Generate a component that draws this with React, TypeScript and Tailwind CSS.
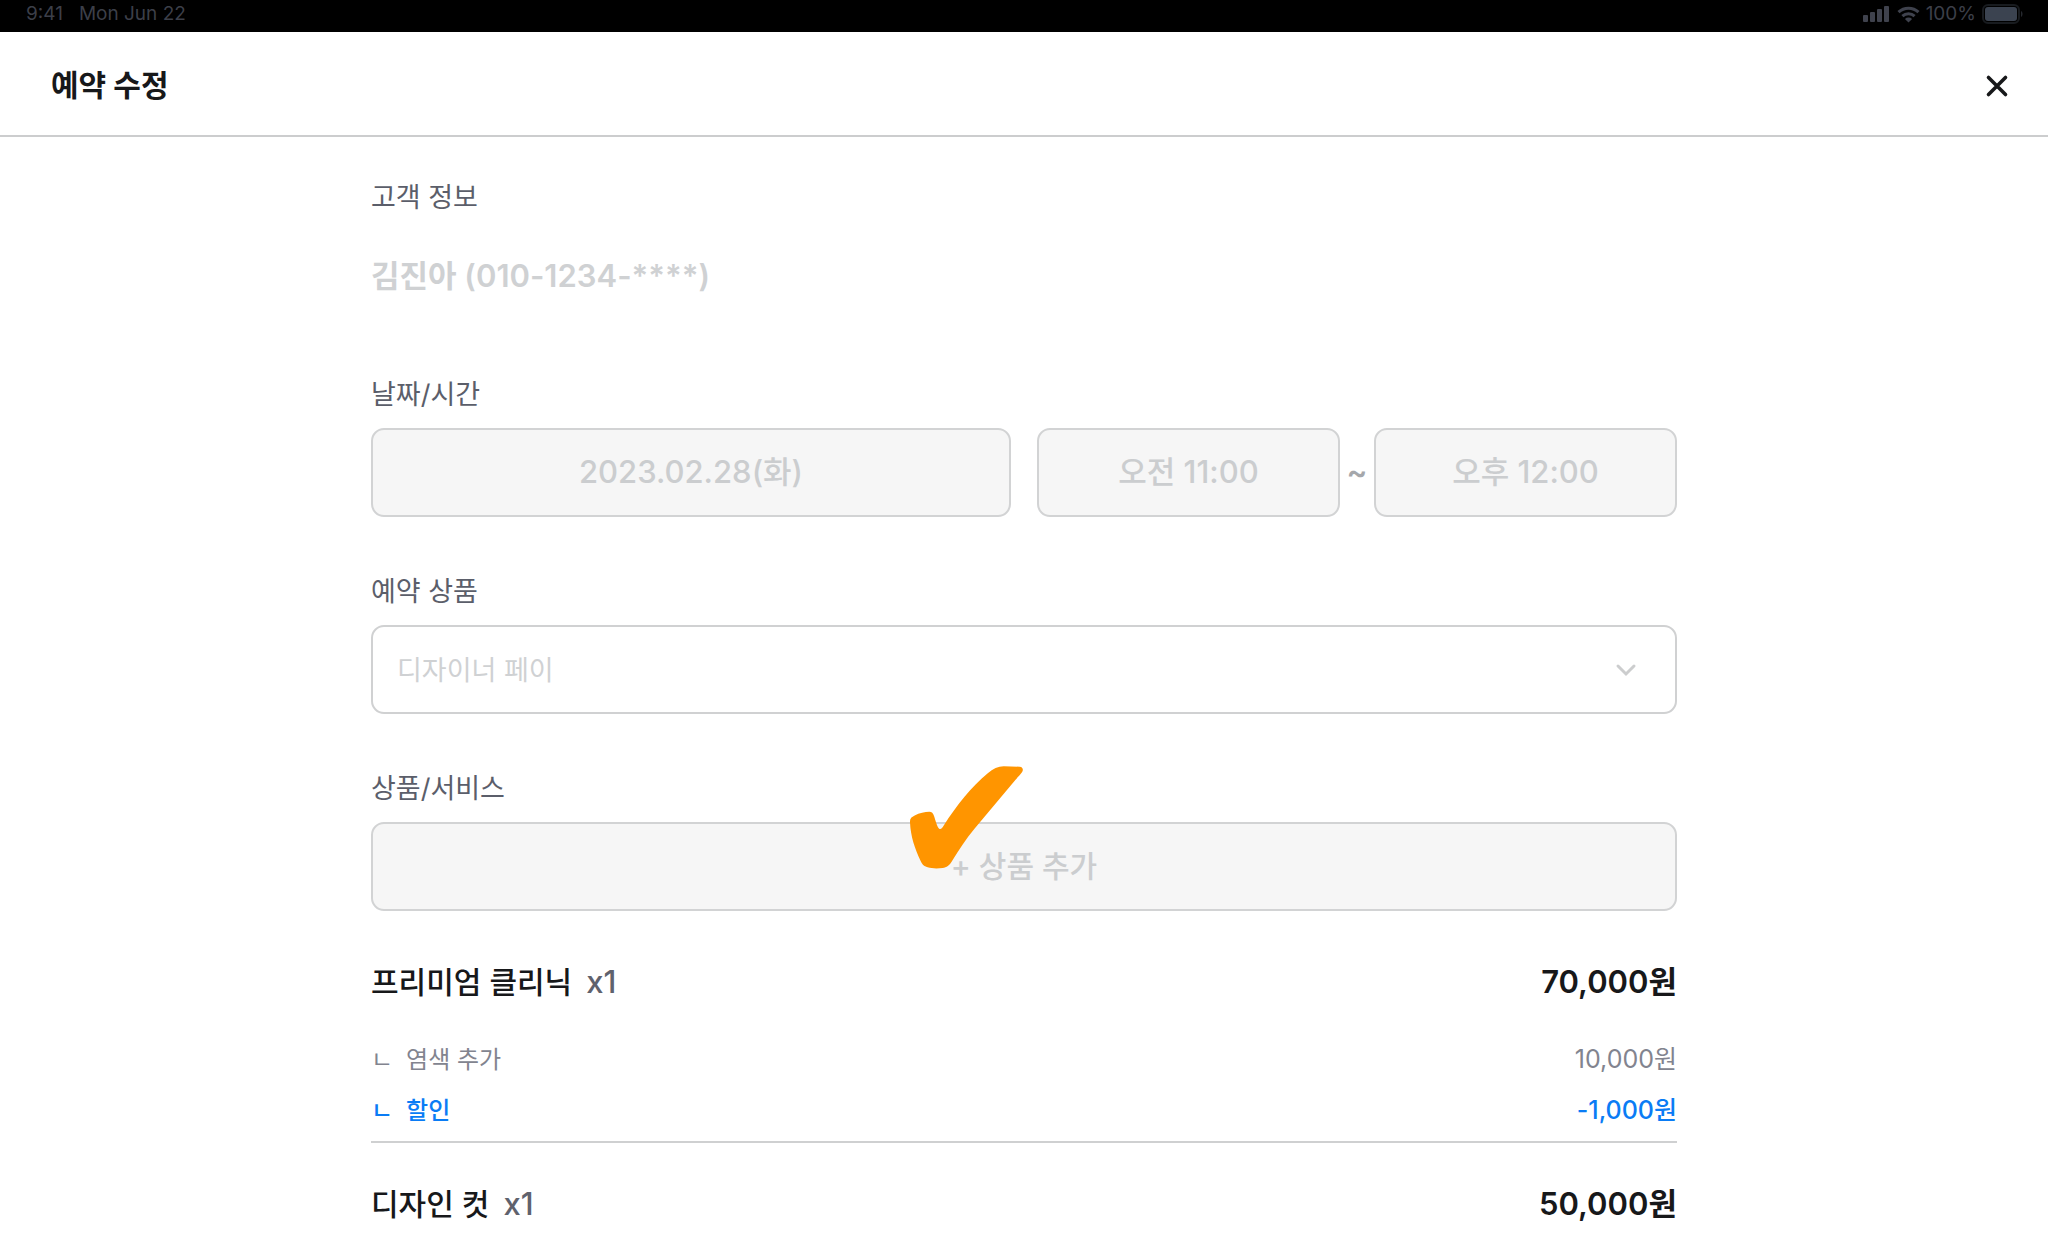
import type { ReactNode } from "react"

const items = [
  {
    name: "프리미엄 클리닉",
    count: 1,
    price: "70,000원",
    options: [
      { name: "염색 추가", price: "10,000원", discount: false },
      { name: "할인", price: "-1,000원", discount: true },
    ],
  },
  { name: "디자인 컷", count: 1, price: "50,000원", options: [] },
]

const disabledBox =
  "h-[89px] rounded-[13px] border-2 border-[#d2d3d4] bg-[#f6f6f6] font-medium text-[#cbcdcf]"

function StatusBar() {
  return (
    <div className="flex h-8 items-center justify-between bg-black pr-6 pb-1 pl-[26px] text-[19px] leading-6 text-[#3c3f49]">
      <div className="flex gap-4">
        <span>9:41</span>
        <span>Mon Jun 22</span>
      </div>
      <div className="flex items-center gap-[6px]">
        <svg width="28" height="18" viewBox="0 0 28 18" fill="#3f424d">
          <rect x="0" y="10" width="5" height="7" rx="1" />
          <rect x="7" y="7" width="5" height="10" rx="1" />
          <rect x="14" y="4" width="5" height="13" rx="1" />
          <rect x="21" y="1" width="5" height="16" rx="1" />
        </svg>
        <svg width="23" height="17" viewBox="0 0 23 17" fill="none" stroke="#3f424d" strokeWidth="3">
          <path d="M1.5 6.2a14.4 14.4 0 0 1 20 0" />
          <path d="M5.4 10.2a8.8 8.8 0 0 1 12.2 0" />
          <path d="M11.5 16.5l-3.6-3.6a5.2 5.2 0 0 1 7.2 0z" fill="#3f424d" stroke="none" />
        </svg>
        <span>100%</span>
        <svg width="42" height="20" viewBox="0 0 42 20">
          <rect x="1" y="1" width="36" height="18" rx="5" fill="none" stroke="#181b1f" strokeWidth="2" />
          <rect x="3" y="3" width="32" height="14" rx="3" fill="#3b4350" />
          <path d="M39 7c2 1 2 5 0 6z" fill="#25282e" />
        </svg>
      </div>
    </div>
  )
}

function Field({ label, htmlFor, children }: { label: string; htmlFor?: string; children: ReactNode }) {
  return (
    <section className="flex flex-col gap-[15px]">
      <label htmlFor={htmlFor} className="text-[27px] leading-9 text-[#5b5e6a]">
        {label}
      </label>
      {children}
    </section>
  )
}

export default function App() {
  return (
    <div className="min-h-screen bg-white font-['Inter','Noto_Sans_CJK_KR',sans-serif] text-[#17181a]">
      <StatusBar />

      {/* Header */}
      <header className="flex h-[105px] items-center justify-between border-b-2 border-[#cccdce] pt-1 pr-[38px] pl-[51px]">
        <h1 className="text-[30px] font-bold">예약 수정</h1>
        <button type="button" aria-label="닫기">
          <svg width="26" height="26" viewBox="0 0 26 26" fill="none" stroke="#17181a" strokeWidth="3.6" strokeLinecap="round">
            <path d="M4.5 4.5l17 17M21.5 4.5l-17 17" />
          </svg>
        </button>
      </header>

      <main className="mx-auto max-w-[1306px] pt-[43px]">
        <div className="flex flex-col gap-[57px]">
          <Field label="고객 정보" htmlFor="customer">
            <input
              id="customer"
              disabled
              value="김진아 (010-1234-****)"
              className="h-[89px] w-full pb-1 text-[31px] font-semibold text-[#cfd1d3]"
            />
          </Field>

          <Field label="날짜/시간" htmlFor="date">
            <div className="grid grid-cols-[666fr_303fr_34px_303fr] items-center text-[31px]">
              <button id="date" type="button" disabled className={`${disabledBox} mr-[26px]`}>
                2023.02.28(화)
              </button>
              <button type="button" disabled className={disabledBox}>
                오전 11:00
              </button>
              <span className="text-center font-semibold text-[#a5a7ab]">~</span>
              <button type="button" disabled className={disabledBox}>
                오후 12:00
              </button>
            </div>
          </Field>

          <Field label="예약 상품" htmlFor="product">
            <div className="relative">
              <select
                id="product"
                disabled
                className="h-[89px] w-full appearance-none rounded-[13px] border-2 border-[#d0d1d2] bg-white px-6 pt-1 text-[27px] text-[#cfd1d3] opacity-100"
              >
                <option>디자이너 페이</option>
              </select>
              <svg
                className="pointer-events-none absolute inset-y-0 right-10 my-auto"
                width="22"
                height="14"
                viewBox="0 0 22 14"
                fill="none"
                stroke="#cccdce"
                strokeWidth="3"
                strokeLinecap="round"
              >
                <path d="M3 3l8 8 8-8" />
              </svg>
            </div>
          </Field>

          <Field label="상품/서비스" htmlFor="add">
            <div className="relative text-[30px]">
              <button id="add" type="button" disabled className={`${disabledBox} w-full`}>
                + 상품 추가
              </button>
              <svg
                className="absolute -top-14 right-1/2"
                width="115"
                height="103"
                viewBox="90 76 344 310"
                fill="#ff9500"
              >
                <path d="M92 246C91 234 96 230 106 225C120 218 137 214 150 214C158 214 161 218 164 226C169 240 173 258 179 264C184 269 189 263 193 256C233 194 277 138 326 98C342 84 357 77 374 77L422 78C432 78 434 88 429 95C423 103 417 109 409 118L286 265C260 296 240 328 219 361C210 376 203 381 190 383C176 385 158 385 145 381C133 377 129 373 124 362C106 323 94 288 92 246Z" />
              </svg>
            </div>
          </Field>
        </div>

        {/* Booked items */}
        <ul className="mt-[50px]">
          {items.map((item) => (
            <li key={item.name} className="mb-10 border-b-2 border-[#cfd0d1] pb-[5px] last:mb-0 last:border-0">
              <div className="flex items-center justify-between leading-[42px]">
                <div className="flex items-center gap-[14px] font-medium">
                  <span className="text-[30px]">{item.name}</span>
                  <span className="text-[31px] text-[#5f626d]">x{item.count}</span>
                </div>
                <span className="text-[31px] font-semibold">{item.price}</span>
              </div>
              {item.options.length > 0 && (
                <ul className="mt-[31px]">
                  {item.options.map((option) => (
                    <li
                      key={option.name}
                      className={`flex items-center justify-between leading-[51px] ${
                        option.discount ? "font-medium text-[#0a7cf5]" : "text-[#82848f]"
                      }`}
                    >
                      <span className="flex gap-[13px] text-[24px]">
                        <span>ㄴ</span>
                        <span>{option.name}</span>
                      </span>
                      <span className="text-[25px]">{option.price}</span>
                    </li>
                  ))}
                </ul>
              )}
            </li>
          ))}
        </ul>
      </main>
    </div>
  )
}
